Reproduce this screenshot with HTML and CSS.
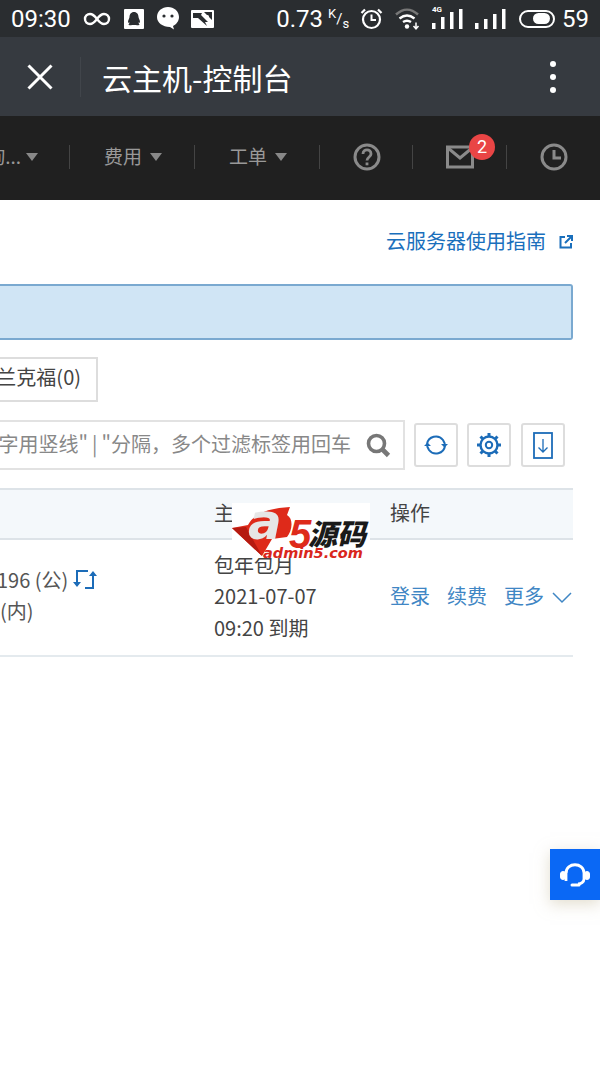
FILE: index.html
```html
<!DOCTYPE html>
<html lang="zh-CN">
<head>
  <meta charset="UTF-8">
  <meta name="viewport" content="width=device-width, initial-scale=1.0">
  <title>云主机-控制台</title>
  <link rel="stylesheet" href="styles.css">
</head>
<body>

  <div class="status">
    <div class="status-left">
      <span class="clock">09:30</span>
      <svg class="ic-inf" width="28" height="18" viewBox="0 0 28 18"><path d="M14 9C11 5 9 4 7 4a5 5 0 0 0 0 10c2 0 4-1 7-5s5-5 7-5a5 5 0 0 1 0 10c-2 0-4-1-7-5z" fill="none" stroke="#fff" stroke-width="2.400"/></svg>
      <svg class="ic-qq" width="20" height="20" viewBox="0 0 20 20"><rect width="20" height="20" rx="1" fill="#fff"/><path d="M10 3c3 0 4.500 2.500 4.500 5 0 1 1.500 3 1.500 5 0 1-.8 1-1.500.2 0 1 .5 1.800 1 2.300 0 .8-2 1-3.500.5h-4c-1.500.5-3.500.3-3.500-.5.500-.5 1-1.300 1-2.300C4.800 14 4 14 4 13c0-2 1.500-4 1.500-5C5.500 5.500 7 3 10 3z" fill="#2a2d30"/></svg>
      <svg class="ic-wx" width="24" height="25" viewBox="0 0 24 25"><path d="M12 1c6 0 11 4.300 11 10 0 4-2.500 7.300-6 9l1 3.500-4-2.600C7 21 1 17 1 11 1 5.300 6 1 12 1z" fill="#fff"/><circle cx="8" cy="10" r="1.600" fill="#2a2d30"/><circle cx="16" cy="10" r="1.600" fill="#2a2d30"/></svg>
      <svg class="ic-pic" width="23" height="18" viewBox="0 0 23 18"><rect width="23" height="18" rx="1" fill="#fff"/><path d="M2 3h9l-1 2 7 7-3 0 2 4L7 8H2zM13 2h8v8l-3-3z" fill="#2a2d30"/><circle cx="16.500" cy="6.500" r="1.500" fill="#fff"/></svg>
    </div>
    <div class="status-right">
      <span class="speed">0.73</span>
      <span class="unit"><sup>K</sup>/<sub>s</sub></span>
      <svg class="ic-alarm" width="23" height="23" viewBox="0 0 23 23" fill="none" stroke="#fff"><circle cx="11.500" cy="12.500" r="8.500" stroke-width="2.200"/><path d="M11.500 7.500v5.500h4.500" stroke-width="2"/><path d="M1.500 6 5 2.500M21.500 6 18 2.500" stroke-width="2.200"/></svg>
      <svg class="ic-wifi" width="25" height="22" viewBox="0 0 25 22" fill="none"><path d="M1 6.500C8 0 16 0 23 6.500" stroke="#777" stroke-width="2.400"/><path d="M4.500 10.500c5-4 10-4 15 0" stroke="#fff" stroke-width="2.400"/><path d="M8 14c3-2 5-2 8 0" stroke="#fff" stroke-width="2.400"/><circle cx="12" cy="18.500" r="2.200" fill="#fff"/><path d="M21 14.500v6M18.500 18l2.500 2.800 2.500-2.800" stroke="#fff" stroke-width="1.500"/></svg>
      <div class="signal sig-4g">
        <span class="tag-4g">4G</span>
        <svg width="31" height="22" viewBox="0 0 31 22" fill="#fff"><rect x="0" y="15" width="3.500" height="6"/><rect x="9" y="9" width="3.500" height="12"/><rect x="18" y="4" width="3.500" height="17"/><rect x="27" y="1" width="3.500" height="20"/></svg>
      </div>
      <svg class="signal" width="31" height="22" viewBox="0 0 31 22" fill="#fff"><rect x="0" y="15" width="3.500" height="6"/><rect x="9" y="11" width="3.500" height="10"/><rect x="18" y="6" width="3.500" height="15"/><rect x="27" y="1" width="3.500" height="20"/></svg>
      <span class="toggle"><span class="toggle-knob"></span></span>
      <span class="battery">59</span>
    </div>
  </div>

  <div class="titlebar">
    <button class="close" aria-label="关闭">
      <svg width="26" height="26" viewBox="0 0 26 26" fill="none" stroke="#fff" stroke-width="3"><path d="M1.500 1.500l23 23M24.500 1.500l-23 23"/></svg>
    </button>
    <div class="title">云主机-控制台</div>
    <div class="dots"><i></i><i></i><i></i></div>
  </div>

  <div class="nav">
    <div class="nav-item nav-first"><span class="nav-text">咨询...</span><i class="caret"></i></div>
    <div class="nav-item"><span class="nav-text">费用</span><i class="caret"></i></div>
    <div class="nav-item"><span class="nav-text">工单</span><i class="caret"></i></div>
    <div class="nav-item nav-icon">
      <svg width="28" height="28" viewBox="0 0 28 28" fill="none" stroke="#8a8a8a" stroke-width="3"><circle cx="14" cy="14" r="12"/><path d="M10 11c0-5.500 8-5.500 8 0 0 3-4 3-4 6.500" stroke-width="2.800"/><path d="M14 19.500v2.800" stroke-width="2.800"/></svg>
    </div>
    <div class="nav-item nav-icon nav-mail">
      <svg width="28" height="24" viewBox="0 0 28 24" fill="none" stroke="#8a8a8a" stroke-width="3"><rect x="1.500" y="2" width="25" height="20"/><path d="M2 3l12 10L26 3"/></svg>
      <span class="badge">2</span>
    </div>
    <div class="nav-item nav-icon nav-last">
      <svg width="28" height="28" viewBox="0 0 28 28" fill="none" stroke="#8a8a8a" stroke-width="3"><circle cx="14" cy="14" r="12"/><path d="M14 7v8h7"/></svg>
    </div>
  </div>

  <div class="content">
    <div class="guide">
      <a class="guide-link">云服务器使用指南</a>
      <svg width="14" height="14" viewBox="0 0 14 14" fill="none" stroke="#1a6fbc" stroke-width="2"><path d="M6 2H1.500v10.500H12V8"/><path d="M6 8l6.500-6.500M8 1h5v5"/></svg>
    </div>

    <div class="notice"></div>

    <div class="tabs"><span class="tab">法兰克福(0)</span></div>

    <div class="toolbar">
      <div class="search">
        <span class="placeholder">多个关键字用竖线"&#8201;|&#8201;"分隔，多个过滤标签用回车</span>
        <svg width="25" height="25" viewBox="0 0 25 25" fill="none" stroke="#777"><circle cx="10.500" cy="10.500" r="8" stroke-width="3.600"/><path d="M16.500 16.500l6 6" stroke-width="4.600"/></svg>
      </div>
      <button class="tool" aria-label="刷新">
        <svg width="26" height="20" viewBox="0 0 26 20" fill="none" stroke="#1c6cb8" stroke-width="2"><path d="M4 9a9 9 0 0 1 16-4l2 4"/><path d="M22 11a9 9 0 0 1-16 4l-2-4"/><path d="M18 9h7l-3.500 3.500zM1 11h7L4.500 7.500z" fill="#1c6cb8" stroke="none"/></svg>
      </button>
      <button class="tool" aria-label="设置">
        <svg width="26" height="26" viewBox="0 0 26 26" fill="none" stroke="#1c6cb8"><circle cx="13" cy="13" r="8.500" stroke-width="2.400"/><circle cx="13" cy="13" r="3.200" stroke-width="2"/><path d="M13 1v3.500M13 21.500V25M1 13h3.500M21.500 13H25M4.500 4.500 7 7M19 19l2.500 2.500M21.500 4.500 19 7M7 19l-2.500 2.500" stroke-width="3"/></svg>
      </button>
      <button class="tool" aria-label="下载">
        <svg width="20" height="27" viewBox="0 0 20 27" fill="none" stroke="#1c6cb8"><rect x="1" y="1" width="18" height="25" stroke-width="1.800"/><path d="M10 7v13M5.500 15.500 10 20l4.500-4.500" stroke-width="1.300"/></svg>
      </button>
    </div>

    <div class="table">
      <div class="thead">
        <div></div>
        <div>主机状态</div>
        <div>操作</div>
      </div>
      <div class="trow">
        <div class="cell-ip">
          <div class="ip-line">196 (公)
            <svg width="24" height="21" viewBox="0 0 24 21" fill="none" stroke="#1c6cb8" stroke-width="2"><path d="M15 2H4v13M12 19h8V6"/><path d="M0 13h8l-4 5zM16 7h8l-4-5z" fill="#1c6cb8" stroke="none"/></svg>
          </div>
          <div class="ip-inner">(内)</div>
        </div>
        <div class="cell-date">
          <div>包年包月</div>
          <div>2021-07-07</div>
          <div>09:20 到期</div>
        </div>
        <div class="cell-ops">
          <a class="op">登录</a>
          <a class="op">续费</a>
          <a class="op">更多</a>
          <svg width="20" height="12" viewBox="0 0 20 12" fill="none" stroke="#3f86c4" stroke-width="1.500"><path d="M1 1l9 9 9-9"/></svg>
        </div>
      </div>
    </div>

    <div class="mark">
      <svg class="mark-shape" width="84" height="55" viewBox="0 0 84 55">
        <path d="M0 25 16 22C22 10 38 5 58 4L55 12C62 16 60 28 55 34L40 36 30 53z" fill="#de2a1a"/>
        <path d="M0 25 14 24 30 53z" fill="#b51a10"/>
        <text class="mark-a" x="16" y="36">a</text>
        <text class="mark-5" x="57" y="45">5</text>
      </svg>
      <span class="mark-cn">源码</span>
      <span class="mark-en">admin5.com</span>
    </div>

    <button class="help" aria-label="客服">
      <svg width="32" height="32" viewBox="0 0 32 32" fill="none" stroke="#fff"><path d="M7 14C7 3 25 3 25 14v6c0 3-3 5-6 5" stroke-width="2.800"/><path d="M7 12v10" stroke-width="2.800"/><rect x="1.500" y="12.500" width="5" height="8" rx="2.500" fill="#fff" stroke-width="1"/><rect x="25.500" y="12.500" width="5" height="8" rx="2.500" fill="#fff" stroke-width="1"/><path d="M13 26h7" stroke-width="3" stroke-linecap="round"/></svg>
    </button>
  </div>

</body>
</html>
```

FILE: styles.css
```css
* {
  box-sizing: border-box;
}

html, body {
  margin: 0;
  height: 1067px;
  overflow: hidden;
}

body {
  font-family: "Noto Sans CJK SC", "Noto Sans", sans-serif;
  background-color: #fff;
  color: #444;
}

button {
  padding: 0;
  border: none;
  background: none;
}

/* barra de estado */
.status {
  display: flex;
  justify-content: space-between;
  align-items: center;
  height: 37px;
  padding: 0 11px;
  background-color: #2a2d30;
  color: #fff;
  font-family: Roboto, sans-serif;
}

.status-left, .status-right {
  display: flex;
  align-items: center;
}

.clock {
  font-size: 24px;
  width: 72px;
}

.ic-qq {
  margin-left: 13px;
}

.ic-wx {
  margin-left: 12px;
}

.ic-pic {
  margin-left: 11px;
}

.speed {
  font-size: 24px;
}

.unit {
  font-size: 15px;
  width: 24px;
  margin-left: 5px;
  line-height: 1;
}

.unit sup, .unit sub {
  font-size: 13px;
}

.ic-alarm {
  margin-left: 8px;
}

.ic-wifi {
  margin-left: 12px;
}

.signal {
  margin-left: 12px;
}

.sig-4g {
  position: relative;
  display: flex;
}

.tag-4g {
  position: absolute;
  top: -3px;
  left: 0;
  font-size: 8px;
  font-weight: bold;
}

.toggle {
  display: flex;
  justify-content: flex-end;
  align-items: center;
  width: 36px;
  height: 18px;
  margin-left: 13px;
  padding-right: 3px;
  border: 2px solid #fff;
  border-radius: 9px;
}

.toggle-knob {
  width: 17px;
  height: 11px;
  border-radius: 6px;
  background-color: #fff;
}

.battery {
  font-size: 24px;
  margin-left: 7px;
}

/* barra de titulo */
.titlebar {
  display: flex;
  align-items: center;
  height: 79px;
  background-color: #363a40;
  color: #fff;
}

.close {
  display: flex;
  align-items: center;
  height: 40px;
  width: 81px;
  padding-left: 27px;
  border-right: 1px solid #41454b;
}

.title {
  flex: 1;
  margin-left: 21px;
  font-size: 30px;
}

.dots {
  display: flex;
  flex-direction: column;
  gap: 7px;
  margin-right: 44px;
}

.dots i {
  width: 6px;
  height: 6px;
  border-radius: 50%;
  background-color: #fff;
}

/* menu */
.nav {
  display: flex;
  justify-content: flex-end;
  align-items: center;
  height: 84px;
  padding-bottom: 2px;
  background-color: #202020;
  color: #999;
  font-size: 19px;
}

.nav-item {
  flex: none;
  display: flex;
  justify-content: center;
  align-items: center;
  gap: 8px;
  width: 125px;
  height: 24px;
  padding-left: 2px;
  border-right: 1px solid #444;
}

.nav-text {
  margin-top: -4px;
}

.nav-first {
  justify-content: flex-end;
  gap: 5px;
  padding-right: 31px;
}

.nav-icon {
  width: 93px;
}

.nav-mail {
  position: relative;
  width: 94px;
  padding-left: 0;
}

.nav-last {
  width: 93px;
  padding-left: 0;
  border-right: none;
}

.caret {
  width: 0;
  height: 0;
  border-left: 6.500px solid transparent;
  border-right: 6.500px solid transparent;
  border-top: 8px solid #888;
}

.badge {
  position: absolute;
  top: -11px;
  left: 56px;
  width: 26px;
  height: 26px;
  border-radius: 50%;
  background-color: #e94545;
  color: #fff;
  font-family: Roboto, sans-serif;
  font-size: 18px;
  line-height: 26px;
  text-align: center;
}

/* contenido */
.content {
  position: relative;
  display: flex;
  flex-direction: column;
  align-items: flex-end;
  width: 600px;
  padding-right: 27px;
}

.guide {
  display: flex;
  align-items: center;
  gap: 13px;
  height: 84px;
  color: #1a6fbc;
  font-size: 20px;
}

.guide-link {
  margin-top: -4px;
}

.notice {
  width: 100%;
  height: 56px;
  background-color: #d0e5f5;
  border: 2px solid #7aa9d0;
  border-left: none;
  border-radius: 0 3px 3px 0;
}

.tabs {
  display: flex;
  justify-content: flex-end;
  width: 573px;
  margin-top: 17px;
  padding-right: 475px;
}

.tab {
  flex: none;
  height: 45px;
  padding: 0 15px;
  border: 2px solid #ddd;
  color: #444;
  font-size: 20px;
  line-height: 36px;
}

.toolbar {
  display: flex;
  justify-content: flex-end;
  align-items: center;
  width: 573px;
  margin-top: 18px;
  padding-right: 8px;
}

.search {
  flex: none;
  display: flex;
  justify-content: flex-end;
  align-items: center;
  gap: 15px;
  height: 50px;
  margin-right: 9px;
  padding-right: 12px;
  border: 2px solid #e2e2e2;
  color: #888;
  font-size: 20px;
}

.placeholder {
  flex: none;
  margin-top: -4px;
}

.tool {
  flex: none;
  display: flex;
  justify-content: center;
  align-items: center;
  width: 44px;
  height: 44px;
  margin-right: 9px;
  border: 2px solid #ddd;
  border-radius: 3px;
}

.tool:nth-child(3) {
  margin-right: 10px;
}

.tool:last-child {
  margin-right: 0;
}

.table {
  width: 100%;
  margin-top: 18px;
}

.thead, .trow {
  display: grid;
  grid-template-columns: 214px 176px 183px;
}

.thead {
  height: 52px;
  align-items: center;
  padding-bottom: 4px;
  background-color: #f4f8fb;
  border-top: 2px solid #dde3e8;
  border-bottom: 2px solid #dde3e8;
  font-size: 20px;
}

.trow {
  height: 117px;
  align-items: center;
  border-bottom: 2px solid #e4eaee;
  font-size: 20px;
  line-height: 31.500px;
}

.cell-ip {
  margin-left: -3px;
  margin-top: -5px;
  color: #555;
}

.ip-line {
  display: flex;
  align-items: center;
  gap: 5px;
}

.ip-inner {
  margin-left: 3px;
}

.cell-date {
  margin-top: -3px;
}

.cell-ops {
  display: flex;
  align-items: center;
  gap: 17px;
  margin-top: -4px;
  color: #3f86c4;
}

.cell-ops svg {
  margin-left: -9px;
  margin-top: 5px;
}

/* marca de agua */
.mark {
  position: absolute;
  top: 303px;
  left: 232px;
  width: 138px;
  height: 55px;
  background-color: #fff;
}

.mark-shape {
  position: absolute;
  top: 0;
  left: 0;
}

.mark-a {
  fill: #e6e6e6;
  font-family: "DejaVu Sans", sans-serif;
  font-size: 50px;
  font-weight: bold;
  font-style: italic;
}

.mark-5 {
  fill: #de2a1a;
  font-family: "Liberation Sans", sans-serif;
  font-size: 40px;
  font-weight: bold;
  font-style: italic;
}

.mark-cn {
  position: absolute;
  top: 9px;
  left: 76px;
  color: #1a1a1a;
  font-size: 29px;
  font-weight: 900;
  font-style: italic;
  line-height: 40px;
}

.mark-en {
  position: absolute;
  top: 41px;
  left: 31px;
  color: #d9261c;
  font-family: "DejaVu Sans", sans-serif;
  font-size: 14.500px;
  font-weight: bold;
  font-style: italic;
  line-height: 18px;
}

.help {
  position: absolute;
  top: 649px;
  right: 0;
  display: flex;
  justify-content: center;
  align-items: center;
  width: 50px;
  height: 51px;
  background-color: #0a68f5;
  box-shadow: 0 4px 14px rgba(200, 190, 160, 0.5);
}
```
